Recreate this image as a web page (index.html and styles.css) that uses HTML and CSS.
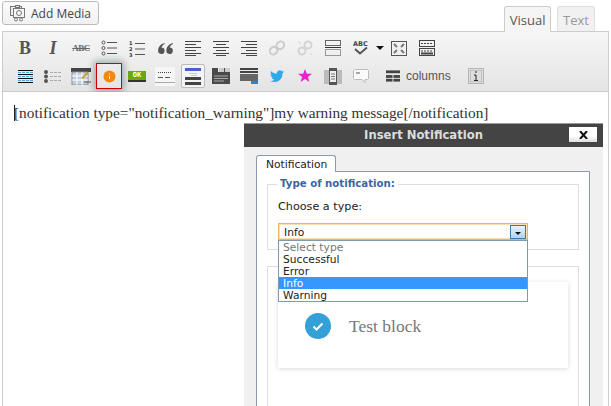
FILE: index.html
```html
<!DOCTYPE html>
<html>

<head>
  <title>Insert Notification</title>
  <meta charset="utf-8">
  <link rel="stylesheet" href="styles.css">
</head>

<body>
  <div class="page">
    <div class="topbar">
      <button class="addMedia">
        <svg width="16" height="17" viewBox="0 0 16 17" fill="none" stroke="#777" stroke-width="1">
          <rect x=".5" y="1.500" width="11" height="9" fill="#eee" />
          <rect x="3.500" y="3.500" width="11" height="9" fill="#f6f6f6" />
          <circle cx="9" cy="8" r="2.500" />
          <rect x="5.500" y=".5" width="4" height="2" fill="#ddd" />
          <circle cx="6" cy="14.500" r="1.500" />
          <circle cx="11" cy="14.500" r="1.500" />
        </svg>
        Add Media
      </button>
      <div class="tabs">
        <div class="tab active">Visual</div>
        <div class="tab">Text</div>
      </div>
    </div>

    <div class="editor">
      <div class="toolbar">
        <div class="row">
          <span class="btn bold">B</span>
          <span class="btn ital">I</span>
          <span class="btn strike">ABC</span>
          <span class="btn">
            <svg width="16" height="16" viewBox="0 0 16 16" fill="none" stroke="#555">
              <circle cx="2.500" cy="2.500" r="1.500" /><circle cx="2.500" cy="8" r="1.500" /><circle cx="2.500" cy="13.500" r="1.500" />
              <path d="M6 2.500h10M6 8h10M6 13.500h10" />
            </svg>
          </span>
          <span class="btn">
            <svg width="16" height="17" viewBox="0 0 16 17" fill="none" stroke="#555">
              <path d="M6 3.500h10M6 9h10M6 14.500h10" />
              <text x="0" y="5" class="num">1</text><text x="0" y="11" class="num">2</text><text x="0" y="17" class="num">3</text>
            </svg>
          </span>
          <span class="btn">
            <svg width="15" height="11" viewBox="0 0 16 12" fill="#555">
              <path d="M7 0C3 1 0 4 0 8a3.500 3.500 0 1 0 3.500-3C4 3.500 5 2 7 1zM16 0c-4 1-7 4-7 8a3.500 3.500 0 1 0 3.500-3c.5-1.500 1.500-3 3.500-4z" />
            </svg>
          </span>
          <span class="btn">
            <svg width="16" height="15" viewBox="0 0 16 15" stroke="#444"><path d="M0 .5h16M0 3.500h11M0 6.500h16M0 9.500h11M0 12.500h16M0 14.500h11" /></svg>
          </span>
          <span class="btn">
            <svg width="16" height="15" viewBox="0 0 16 15" stroke="#444"><path d="M0 .5h16M3 3.500h10M0 6.500h16M3 9.500h10M0 12.500h16M3 14.500h10" /></svg>
          </span>
          <span class="btn">
            <svg width="16" height="15" viewBox="0 0 16 15" stroke="#444"><path d="M0 .5h16M5 3.500h11M0 6.500h16M5 9.500h11M0 12.500h16M5 14.500h11" /></svg>
          </span>
          <span class="btn">
            <svg width="16" height="16" viewBox="0 0 16 16" fill="none" stroke="#ccc" stroke-width="2">
              <rect x="8" y="1" width="7" height="8" rx="3.500" transform="rotate(40 11 5)" />
              <rect x="1" y="7" width="7" height="8" rx="3.500" transform="rotate(40 5 11)" />
            </svg>
          </span>
          <span class="btn">
            <svg width="16" height="16" viewBox="0 0 16 16" fill="none" stroke="#d4d4d4" stroke-width="2">
              <circle cx="11" cy="5" r="3.500" /><circle cx="5" cy="11" r="3.500" />
              <path d="M1 1l3 3M13 13l2 2" stroke-width="1" />
            </svg>
          </span>
          <span class="btn">
            <svg width="16" height="16" viewBox="0 0 16 16" fill="none" stroke="#666">
              <rect x=".5" y=".5" width="15" height="5" />
              <path d="M0 7.500h16" stroke="#333" />
              <rect x=".5" y="9.500" width="15" height="6" stroke="#999" />
            </svg>
          </span>
          <span class="btn spell">
            <svg width="17" height="16" viewBox="0 0 17 16">
              <text x="0" y="6" class="abc">ABC</text>
              <path d="M2 9l5 4.500 7-6" fill="none" stroke="#555" stroke-width="2" />
            </svg>
            <i class="arrow"></i>
          </span>
          <span class="btn">
            <svg width="16" height="15" viewBox="0 0 16 15" fill="none" stroke="#555">
              <rect x=".5" y=".5" width="15" height="14" />
              <path d="M3 3l3 3M13 3l-3 3M3 12l3-3M13 12l-3-3" stroke="#778" stroke-width="2" />
            </svg>
          </span>
          <span class="btn">
            <svg width="16" height="16" viewBox="0 0 16 16" fill="none" stroke="#444">
              <rect x=".5" y=".5" width="15" height="6" />
              <rect x=".5" y="8.500" width="15" height="7" />
              <path d="M2 3.500h12" stroke-dasharray="2 1" />
              <path d="M2 11h12" stroke-dasharray="2 1" />
              <path d="M2 13.500h12" stroke-width="2" />
            </svg>
          </span>
        </div>
        <div class="row">
          <span class="btn">
            <svg width="15" height="13" viewBox="0 0 15 13" stroke="#111">
              <path d="M0 2.500h15M0 6.500h15M0 10.500h15" stroke="#45a8e8" stroke-dasharray="3 1" />
              <path d="M0 .5h15M0 4.500h15M0 8.500h15M0 12.500h15" />
            </svg>
          </span>
          <span class="btn">
            <svg width="18" height="13" viewBox="0 0 18 13" fill="#555" stroke="#aaa">
              <circle cx="2" cy="2" r="2" stroke="none" /><circle cx="2" cy="6.500" r="2" stroke="none" /><circle cx="2" cy="11" r="2" stroke="none" />
              <path d="M6 2.500h12M6 6.500h12M6 10.500h12" stroke-dasharray="3 1" />
            </svg>
          </span>
          <span class="btn">
            <svg width="20" height="17" viewBox="0 0 20 17">
              <rect x="0" y="0" width="20" height="4" fill="#444" />
              <rect x="1" y="4" width="16" height="13" fill="#c4cfe0" stroke="#888" />
              <path d="M6 4v13M11 4v13M1 8h16M1 12h16" stroke="#fff" />
              <path d="M10 10l6-6 2 1-6 6z" fill="#c9a227" />
              <path d="M13 14h7" stroke="#555" />
            </svg>
          </span>
          <span class="btn notify">
            <svg width="13" height="13" viewBox="0 0 13 13">
              <circle cx="6.500" cy="6.500" r="6" fill="#f18a0b" />
              <path d="M6.500 3.500v1M6.500 6v3" stroke="#fff" fill="none" />
            </svg>
          </span>
          <span class="btn">
            <span class="okBtn">OK</span>
          </span>
          <span class="btn">
            <svg width="20" height="19" viewBox="0 0 20 19">
              <rect width="20" height="19" fill="#f6f6f6" />
              <path d="M3 5.500h14" stroke="#444" stroke-dasharray="1 1" />
              <path d="M3 10.500h5M10 10.500h5" stroke="#555" />
              <path d="M0 15.500h20" stroke="#aaa" />
            </svg>
          </span>
          <span class="btn selected">
            <svg width="18" height="17" viewBox="0 0 18 17">
              <rect x="1" y="0" width="16" height="3" fill="#4a5fd0" />
              <path d="M5 5.500h8M7 7.500h6" stroke="#ccc" />
              <rect x="1" y="9" width="16" height="3" fill="#444" />
              <rect x="1" y="14" width="16" height="3" fill="#444" />
            </svg>
          </span>
          <span class="btn">
            <svg width="18" height="16" viewBox="0 0 18 16">
              <path d="M0 0h6v4h6V0h6v16H0z" fill="#4a4a4a" />
              <rect x="7" y="0" width="5" height="4" fill="#ccc" />
              <rect x="13" y="0" width="5" height="4" fill="#ccc" />
              <path d="M2 8h14M2 10.500h14M2 13h10" stroke="#aaa" />
            </svg>
          </span>
          <span class="btn">
            <svg width="18" height="16" viewBox="0 0 18 16">
              <rect width="18" height="2" fill="#444" />
              <rect y="3" width="18" height="2" fill="#444" />
              <rect y="6" width="18" height="7" fill="#666" />
              <rect x="11" y="13" width="7" height="3" fill="#2a86c4" />
            </svg>
          </span>
          <span class="btn">
            <svg width="14" height="12" viewBox="0 0 14 12">
              <path d="M14 1.500l-1.500.5 1-1.500-1.800.7a2.900 2.900 0 0 0-4.900 2.600C4.500 3.700 2.400 2.700 1 1c-.8 1.300-.4 3 .9 3.900L.6 4.500c0 1.400 1 2.600 2.300 2.900H1.600c.4 1.100 1.400 1.900 2.700 2C3.200 10.800 1.800 11.200 0 11c5 2.500 12.500.5 12.500-7.500z" fill="#2fa9e8" />
            </svg>
          </span>
          <span class="btn">
            <svg width="14" height="14" viewBox="0 0 14 14">
              <path d="M7 0l1.800 4.800H14l-4.100 3.100 1.500 5.100L7 10.100 2.600 13l1.500-5.100L0 4.800h5.200z" fill="#f01fcf" />
            </svg>
          </span>
          <span class="btn">
            <svg width="18" height="17" viewBox="0 0 18 17">
              <rect y="2" width="18" height="14" fill="#bbb" />
              <rect x="5" y="0" width="8" height="17" fill="#555" />
              <rect x="6" y="3" width="6" height="11" fill="#eee" />
              <path d="M7 6h4M7 8.500h4M7 11h4" stroke="#777" />
            </svg>
          </span>
          <span class="btn">
            <svg width="16" height="15" viewBox="0 0 16 15">
              <path d="M1.500.5h13l1 1v8l-1 1H12v3l-3-3H1.500l-1-1v-8z" fill="#fafafa" stroke="#bbb" />
              <path d="M4 3v2M6 3v2" stroke="#555" />
            </svg>
          </span>
          <span class="btn columns">
            <svg width="14" height="12" viewBox="0 0 15 12" fill="#444">
              <rect width="15" height="3" />
              <rect y="5" width="7" height="3" /><rect x="8" y="5" width="7" height="3" />
              <rect y="9" width="7" height="3" /><rect x="8" y="9" width="7" height="3" />
            </svg>
            columns
          </span>
          <span class="btn info">
            <svg width="16" height="16" viewBox="0 0 16 16">
              <rect x=".5" y=".5" width="15" height="15" fill="#ddd" />
              <rect x=".5" y=".5" width="15" height="15" fill="none" stroke="#888" stroke-dasharray="1 1" />
              <rect x="2.500" y="2.500" width="11" height="11" fill="none" stroke="#aaa" stroke-dasharray="1 1" />
              <path d="M8 3v2M6 7H8v5M6 12.500h4" stroke="#222" fill="none" />
            </svg>
          </span>
        </div>
      </div>

      <div class="content">
        <p><span class="caret"></span>[notification type="notification_warning"]my warning message[/notification]</p>

        <div class="dialog">
          <div class="dialogTitle">
            Insert Notification
            <span class="closeBtn">
              <svg width="9" height="8" viewBox="0 0 9 8"><path d="M1 0l7 8M8 0L1 8" stroke="#111" stroke-width="2" /></svg>
            </span>
          </div>
          <div class="dialogBody">
            <div class="panelTab">Notification</div>
            <div class="panel">
              <div class="group first">
                <span class="legend">Type of notification:</span>
                <label class="chooseLabel">Choose a type:</label>
                <div class="selectBox">
                  Info
                  <span class="selectArrow"><i></i></span>
                </div>
                <ul class="dropdown">
                  <li class="muted">Select type</li>
                  <li>Successful</li>
                  <li>Error</li>
                  <li class="current">Info</li>
                  <li>Warning</li>
                </ul>
              </div>
              <div class="group second">
                <div class="card">
                  <svg width="26" height="26" viewBox="0 0 26 26">
                    <circle cx="13" cy="13" r="13" fill="#34a0d8" />
                    <path d="M8.500 13.500l3 3 6-6" fill="none" stroke="#fff" stroke-width="2" />
                  </svg>
                  <span class="cardText">Test block</span>
                </div>
              </div>
            </div>
          </div>
        </div>
      </div>
    </div>
  </div>
</body>

</html>
```

FILE: styles.css
```css
html, body {
  margin: 0;
  height: 100%;
  overflow: hidden;
  background-color: white;
}

.page {
  width: 611px;
  height: 406px;
  overflow: hidden;
  font-family: "Liberation Sans", Arial, sans-serif;
}

.topbar {
  display: flex;
  justify-content: space-between;
  height: 31px;
  padding: 1px 16px 0 2px;
  box-sizing: border-box;
}

.addMedia {
  display: flex;
  align-items: center;
  gap: 5px;
  width: 97px;
  height: 24px;
  padding: 0 0 0 7px;
  border: 1px solid #bbb;
  border-radius: 3px;
  background: linear-gradient(#fcfcfc, #f1f1f1);
  font-family: "Open Sans", sans-serif;
  font-size: 12px;
  color: #444;
}

.tabs {
  display: flex;
  gap: 6px;
  padding-top: 5px;
}

.tab {
  height: 25px;
  line-height: 26px;
  padding: 0 5px;
  border: 1px solid #dfdfdf;
  border-bottom: none;
  border-radius: 3px 3px 0 0;
  background-color: #f1f1f1;
  font-family: "Open Sans", sans-serif;
  font-size: 13px;
  color: #999;
}

.tab.active {
  position: relative;
  z-index: 2;
  width: 47px;
  height: 26px;
  padding: 0;
  box-sizing: border-box;
  border-color: #ccc;
  background-color: #f5f5f5;
  text-align: center;
  color: #555;
}

.editor {
  position: relative;
  width: 607px;
  height: 375px;
  margin-left: 2px;
  border: 1px solid #ccc;
  border-bottom: none;
  box-sizing: border-box;
}

.toolbar {
  height: 60px;
  padding: 2px 0 0 8px;
  box-sizing: border-box;
  border-bottom: 1px solid #ccc;
  background: linear-gradient(#f6f6f6, #e4e4e4);
}

.row {
  display: flex;
  height: 28px;
}

.btn {
  position: relative;
  display: flex;
  align-items: center;
  justify-content: center;
  flex: 0 0 28px;
  height: 28px;
}

.bold {
  font-family: "Liberation Serif", serif;
  font-weight: bold;
  font-size: 18px;
  color: #555;
}

.ital {
  font-family: "Liberation Serif", serif;
  font-style: italic;
  font-weight: bold;
  font-size: 18px;
  color: #555;
}

.strike {
  font-family: "Liberation Serif", serif;
  font-size: 9px;
  font-weight: bold;
  letter-spacing: -0.5px;
  color: #666;
  text-decoration: line-through;
}

.num {
  font-family: "DejaVu Sans", sans-serif;
  font-size: 5px;
  font-weight: bold;
  fill: #333;
  stroke: none;
}

.abc {
  font-family: "DejaVu Sans", sans-serif;
  font-size: 6.5px;
  font-weight: bold;
  fill: #444;
}

.spell {
  flex-basis: 38px;
  justify-content: flex-start;
  padding-left: 6px;
  box-sizing: border-box;
  gap: 6px;
}

.arrow {
  width: 0;
  height: 0;
  border: 4px solid transparent;
  border-top: 4px solid #111;
  border-bottom: none;
}

.notify {
  height: 26px;
  margin-top: 1px;
  box-sizing: border-box;
  border: 1px solid #c00;
  flex-basis: 26px;
  margin-left: 1px;
  margin-right: 1px;
  box-shadow: 0 0 7px 2px rgba(0, 0, 0, 0.3);
}

.okBtn {
  width: 18px;
  height: 9px;
  line-height: 9px;
  border-bottom: 2px solid #333;
  background-color: #6aa80d;
  font-family: "DejaVu Sans Mono", monospace;
  font-size: 7px;
  font-weight: bold;
  text-align: center;
  color: white;
}

.selected {
  flex-basis: 24px;
  height: 24px;
  margin: 2px;
  box-sizing: border-box;
  border: 1px solid #bbb;
  border-radius: 2px;
  background-color: #f4f4f4;
}

.columns {
  flex-basis: auto;
  margin-left: 11px;
  gap: 6px;
  font-size: 12px;
  color: #555;
}

.info {
  margin-left: 11px;
}

.content {
  position: relative;
  height: 314px;
  background-color: white;
}

.content p {
  margin: 0;
  padding: 12px 0 0 11px;
  font-family: "Liberation Serif", serif;
  font-size: 15.3px;
  line-height: 18px;
  color: #333;
}

.caret {
  display: inline-block;
  width: 1px;
  height: 16px;
  margin: 0 -1px -3px 0;
  background-color: #222;
}

.dialog {
  position: absolute;
  left: 241px;
  top: 31px;
  width: 359px;
  height: 300px;
  border-top: 1px solid #999;
  background-color: #f0f0f0;
  font-family: "DejaVu Sans", Verdana, sans-serif;
  font-size: 10.7px;
  color: #222;
}

.dialogTitle {
  position: relative;
  height: 23px;
  line-height: 23px;
  background-color: #444;
  font-weight: bold;
  font-size: 11.6px;
  text-align: center;
  color: #ddd;
}

.closeBtn {
  position: absolute;
  right: 6px;
  top: 3px;
  display: flex;
  align-items: center;
  justify-content: center;
  width: 28px;
  height: 15px;
  background: linear-gradient(#fff 60%, #ddd);
}

.dialogBody {
  padding: 8px 13px 0 12px;
}

.panelTab {
  position: relative;
  z-index: 1;
  width: 80px;
  height: 17px;
  line-height: 18px;
  box-sizing: border-box;
  margin-bottom: -1px;
  padding-left: 9px;
  border: 1px solid #8a9bab;
  border-bottom: none;
  border-radius: 3px 3px 0 0;
  background-color: white;
}

.panel {
  height: 240px;
  padding: 12px 10px 0;
  border: 1px solid #8a9bab;
  background-color: white;
}

.group {
  position: relative;
  border: 1px solid #ddd;
}

.group.first {
  height: 64px;
  margin-bottom: 16px;
}

.group.second {
  height: 200px;
  padding: 15px 10px 0;
}

.legend {
  position: absolute;
  left: 9px;
  top: -7px;
  padding: 0 3px 0 3px;
  background-color: white;
  font-size: 10.2px;
  font-weight: bold;
  color: #3a66a8;
}

.chooseLabel {
  display: block;
  padding: 16px 0 10px 10px;
  font-size: 11.2px;
  line-height: 12px;
}

.selectBox {
  position: relative;
  z-index: 1;
  height: 17px;
  line-height: 17px;
  width: 250px;
  margin-left: 10px;
  padding-left: 5px;
  box-sizing: border-box;
  border: 1px solid #e8b660;
  box-shadow: inset 0 0 0 1px #f6e0b4;
  background-color: white;
}

.selectArrow {
  position: absolute;
  right: 1px;
  top: 1px;
  display: flex;
  justify-content: center;
  align-items: flex-end;
  width: 16px;
  height: 14px;
  box-sizing: border-box;
  padding-bottom: 3px;
  border: 1px solid #3a7ca8;
  background: linear-gradient(#e8f3fb, #a9d6f5);
}

.selectArrow i {
  width: 0;
  height: 0;
  border: 3px solid transparent;
  border-top: 3px solid #111;
  border-bottom: none;
}

.dropdown {
  position: absolute;
  z-index: 3;
  left: 10px;
  top: 55px;
  width: 250px;
  margin: 0;
  padding: 0;
  box-sizing: border-box;
  border: 1px solid #7d9ab3;
  list-style: none;
  background-color: white;
}

.dropdown li {
  height: 12px;
  line-height: 14px;
  padding-left: 4px;
}

.dropdown .muted {
  color: #777;
}

.dropdown .current {
  background-color: #3399ff;
  color: white;
}

.card {
  display: flex;
  align-items: center;
  gap: 18px;
  height: 86px;
  width: 290px;
  padding: 2px 0 0 27px;
  box-sizing: border-box;
  background-color: white;
  box-shadow: 0 1px 5px rgba(0, 0, 0, 0.15);
}

.cardText {
  font-family: "Liberation Serif", serif;
  font-size: 17.5px;
  color: #777;
}
```
